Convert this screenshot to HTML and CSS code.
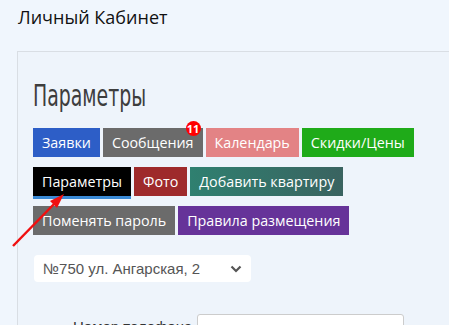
FILE: index.html
```html
<!DOCTYPE html>
<html lang="ru">
<head>
<meta charset="utf-8">
<link rel="stylesheet" href="styles.css">
</head>
<body>
<header class="top">Личный Кабинет</header>
<main class="panel">
  <h1 class="heading">Параметры</h1>
  <div class="btns">
    <span class="btn blue">Заявки</span>
    <span class="btn gray msg">Сообщения<span class="badge">11</span></span>
    <span class="btn pink">Календарь</span>
    <span class="btn green">Скидки/Цены</span>
    <span class="btn black active">Параметры</span>
    <span class="btn red">Фото</span>
    <span class="btn teal">Добавить квартиру</span>
    <span class="btn gray">Поменять пароль</span>
    <span class="btn purple">Правила размещения</span>
  </div>
  <div class="select">
    <span>№750 ул. Ангарская, 2</span>
    <svg class="chev" width="12" height="8" viewBox="0 0 12 8"><path d="M1.5 1.5 L6 6 L10.5 1.5" fill="none" stroke="#555" stroke-width="2.2"/></svg>
  </div>
  <div class="field">
    <label class="label">Номер телефона</label>
    <div class="input"></div>
  </div>
</main>
<svg class="arrow" width="70" height="70" viewBox="0 0 70 70">
  <line x1="13" y1="62" x2="56" y2="18" stroke="#f01010" stroke-width="2.5"/>
  <path d="M64 10 L50 17 L57 24 Z" fill="#f01010"/>
</svg>
</body>
</html>
```
FILE: styles.css
```css
html, body { margin: 0; padding: 0; }
body {
  background: #f0f6fd;
  font-family: "Open Sans", "Noto Sans", sans-serif;
  width: 449px;
  height: 325px;
  overflow: hidden;
  position: relative;
}
.top {
  font-size: 18px;
  color: #111;
  padding: 5px 0 0 18px;
  height: 46px;
  box-sizing: border-box;
}
.panel {
  margin: 5px 0 0 17px;
  border-top: 1px solid #d9dee4;
  border-left: 1px solid #d9dee4;
  background: #eef4fb;
  padding: 28px 0 0 15px;
  min-height: 400px;
}
.heading {
  margin: 0 0 16px 0;
  font-family: "DejaVu Sans Condensed", "DejaVu Sans", sans-serif;
  font-weight: 200;
  font-size: 30px;
  color: #3d3d3d;
  line-height: 32px;
  height: 32px;
  transform: scaleX(0.7);
  transform-origin: left center;
  white-space: nowrap;
}
.btns {
  display: flex;
  flex-wrap: wrap;
  column-gap: 3px;
  row-gap: 10px;
  width: 400px;
}
.btn {
  height: 29px;
  line-height: 29px;
  padding: 0 9px;
  color: #fff;
  font-size: 14.3px;
  position: relative;
  white-space: nowrap;
}
.blue { background: #2d5ec7; }
.gray { background: #6b6b6b; }
.pink { background: #e38385; }
.green { background: #1fab19; }
.black { background: #000; }
.red { background: #9e2a2b; }
.teal { background: linear-gradient(90deg, #2f8070, #3a6360); }
.purple { background: #663399; }
.active { box-shadow: 0 3px 0 #3a8ad6; }
.badge {
  position: absolute;
  top: -7px;
  right: 2px;
  width: 15px;
  height: 15px;
  border-radius: 50%;
  background: #f00;
  color: #fff;
  font-size: 11px;
  font-weight: bold;
  line-height: 15px;
  text-align: center;
}
.select {
  margin: 20px 0 0 1px;
  width: 217px;
  height: 27px;
  background: #fff;
  border-radius: 4px;
  display: flex;
  align-items: center;
  justify-content: space-between;
  padding: 0 9px 0 9px;
  box-sizing: border-box;
  color: #555;
  font-family: "Liberation Sans", Arial, sans-serif;
  font-size: 15px;
}
.field {
  display: flex;
  align-items: flex-start;
  margin-top: 32px;
  padding-left: 40px;
}
.label {
  font-family: "Liberation Sans", Arial, sans-serif;
  font-size: 15px;
  color: #333;
  width: 124px;
  padding-top: 4px;
}
.input {
  width: 205px;
  height: 30px;
  background: #fff;
  border: 1px solid #ccc;
  border-radius: 3px;
}
.arrow {
  position: absolute;
  left: 0;
  top: 184px;
}
```
